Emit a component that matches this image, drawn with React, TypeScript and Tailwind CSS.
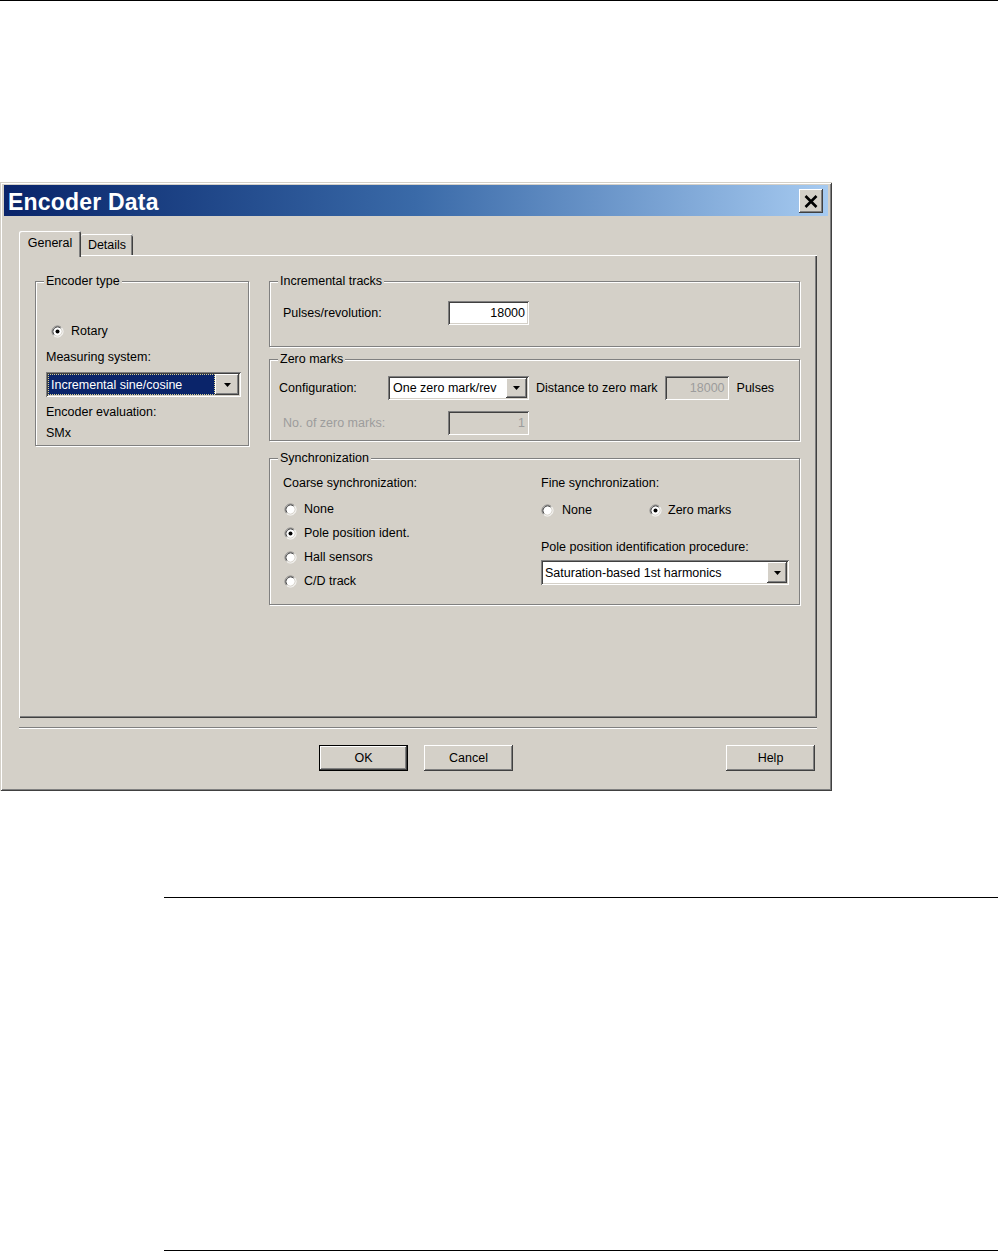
import React from "react";

const sunken =
  "shadow-[inset_1px_1px_0_#808080,inset_-1px_-1px_0_#ffffff,inset_2px_2px_0_#404040,inset_-2px_-2px_0_#d4d0c8]";
const raised =
  "shadow-[inset_-1px_-1px_0_#404040,inset_1px_1px_0_#ffffff,inset_-2px_-2px_0_#808080,inset_2px_2px_0_#d4d0c8]";
const etched = "border border-[#808080] shadow-[inset_1px_1px_0_#ffffff,1px_1px_0_#ffffff]";

function Radio({ checked }: { checked?: boolean }) {
  return (
    <svg width="13" height="13" viewBox="-0.5 -0.5 13 13" className="shrink-0">
      <circle cx="6" cy="6" r="5" fill="#ffffff" />
      <path d="M2.11 9.89A5.5 5.5 0 0 1 9.89 2.11" stroke="#808080" fill="none" />
      <path d="M9.89 2.11A5.5 5.5 0 0 1 2.11 9.89" stroke="#ffffff" fill="none" />
      <path d="M2.82 9.18A4.5 4.5 0 0 1 9.18 2.82" stroke="#404040" fill="none" />
      <path d="M9.18 2.82A4.5 4.5 0 0 1 2.82 9.18" stroke="#d4d0c8" fill="none" />
      {checked && <circle cx="6" cy="6" r="2" fill="#000000" />}
    </svg>
  );
}

function Arrow() {
  return (
    <svg width="7" height="4" viewBox="0 0 7 4">
      <path d="M0 0H7L3.5 4Z" fill="#000000" />
    </svg>
  );
}

function Legend({ children }: { children: React.ReactNode }) {
  return (
    <span className="absolute left-[8px] -top-[9px] px-[2px] bg-[#d4d0c8] leading-[16px] whitespace-nowrap">
      {children}
    </span>
  );
}

function Combo({
  outer,
  btn,
  children,
}: {
  outer: string;
  btn: string;
  children: React.ReactNode;
}) {
  return (
    <div className={`${outer} ${sunken} bg-white p-[2px] flex shrink-0`}>
      <div className="flex-1 flex items-center min-w-0 overflow-hidden whitespace-nowrap">{children}</div>
      <div className={`${btn} ${raised} bg-[#d4d0c8] flex items-center justify-center shrink-0`}>
        <Arrow />
      </div>
    </div>
  );
}

function Dialog() {
  return (
    <div className="mt-[181px] w-[832px] h-[609px] shrink-0 bg-[#d4d0c8] pt-[3px] px-[4px] pb-[4px] flex flex-col shadow-[inset_1px_1px_0_#d4d0c8,inset_-1px_-1px_0_#404040,inset_2px_2px_0_#ffffff,inset_-2px_-2px_0_#808080]">
      {/* Title bar */}
      <div className="h-[31px] shrink-0 bg-linear-to-r from-[#0a246a] via-[#3a6aa8] to-[#a6caf0] flex items-center justify-between pl-[4px] pr-[5px]">
        <span className="text-white font-bold text-[23px] leading-none pt-[4px] tracking-[0.2px]">Encoder Data</span>
        <div className={`w-[24px] h-[24px] ${raised} bg-[#d4d0c8] flex items-center justify-center mt-[1px]`}>
          <svg width="14" height="13" viewBox="0 0 14 13">
            <path d="M1.5 1L12.5 12M12.5 1L1.5 12" stroke="#000000" strokeWidth="2.6" />
          </svg>
        </div>
      </div>

      {/* Body */}
      <div className="flex-1 flex flex-col pl-[15px] pr-[11px]">
        {/* Tabs */}
        <div className="mt-[15px] h-[24px] flex items-end shrink-0">
          <div className="relative z-10 w-[62px] h-[26px] -mb-[2px] pb-[2px] bg-[#d4d0c8] rounded-t-[2px] flex items-center justify-center shadow-[inset_1px_1px_0_#ffffff,inset_-1px_0_0_#404040,inset_-2px_0_0_#808080]">
            General
          </div>
          <div className="w-[52px] h-[21px] bg-[#d4d0c8] rounded-t-[2px] flex items-center justify-center shadow-[inset_0_1px_0_#ffffff,inset_-1px_0_0_#404040,inset_-2px_0_0_#808080]">
            Details
          </div>
        </div>

        {/* Tab panel */}
        <div className="h-[463px] shrink-0 flex pt-[26px] pl-[16px] shadow-[inset_1px_1px_0_#ffffff,inset_-1px_-1px_0_#404040,inset_-2px_-2px_0_#808080]">
          {/* Encoder type */}
          <div className={`relative w-[214px] h-[165px] ${etched} pl-[10px] pt-[41px] flex flex-col shrink-0`}>
            <Legend>Encoder type</Legend>
            <div className="h-[16px] flex items-center pl-[5px] gap-[7px]">
              <Radio checked />
              <span>Rotary</span>
            </div>
            <div className="mt-[10px] h-[16px]">Measuring system:</div>
            <Combo outer="mt-[7px] w-[195px] h-[25px]" btn="w-[24px] h-full">
              <div className="h-full w-full bg-[#0a246a] text-white flex items-center pl-[2px] border border-dotted border-[#d8d090]">
                Incremental sine/cosine
              </div>
            </Combo>
            <div className="mt-[7px] h-[16px]">Encoder evaluation:</div>
            <div className="mt-[5px] h-[16px]">SMx</div>
          </div>

          {/* Right column */}
          <div className="ml-[20px] w-[531px] flex flex-col shrink-0">
            {/* Incremental tracks */}
            <div className={`relative h-[66px] ${etched} pt-[19px] pl-[13px]`}>
              <Legend>Incremental tracks</Legend>
              <div className="flex items-center h-[24px]">
                <span className="w-[165px] shrink-0">Pulses/revolution:</span>
                <div className={`w-[81px] h-[24px] ${sunken} bg-white flex items-center justify-end pr-[4px]`}>18000</div>
              </div>
            </div>

            {/* Zero marks */}
            <div className={`relative mt-[12px] h-[82px] ${etched} pt-[16px] pl-[9px] flex flex-col`}>
              <Legend>Zero marks</Legend>
              <div className="flex items-center h-[24px]">
                <span className="w-[109px] shrink-0">Configuration:</span>
                <Combo outer="w-[141px] h-[24px]" btn="w-[21px] h-full">
                  <span className="pl-[3px]">One zero mark/rev</span>
                </Combo>
                <span className="ml-[7px] whitespace-nowrap">Distance to zero mark</span>
                <div className={`ml-[7px] w-[64px] h-[24px] ${sunken} bg-[#d4d0c8] text-[#9c9c9c] flex items-center justify-end pr-[4px] shrink-0`}>
                  18000
                </div>
                <span className="ml-[8px]">Pulses</span>
              </div>
              <div className="mt-[11px] pl-[4px] flex items-center h-[24px]">
                <span className="w-[165px] shrink-0 text-[#9c9c9c]">No. of zero marks:</span>
                <div className={`w-[81px] h-[24px] ${sunken} bg-[#d4d0c8] text-[#9c9c9c] flex items-center justify-end pr-[4px]`}>1</div>
              </div>
            </div>

            {/* Synchronization */}
            <div className={`relative mt-[17px] h-[147px] ${etched} pt-[16px] pl-[13px] flex`}>
              <Legend>Synchronization</Legend>
              <div className="w-[258px] flex flex-col shrink-0">
                <div className="h-[16px]">Coarse synchronization:</div>
                <div className="mt-[10px] flex flex-col gap-[8px]">
                  {[
                    ["None", false],
                    ["Pole position ident.", true],
                    ["Hall sensors", false],
                    ["C/D track", false],
                  ].map(([t, c]) => (
                    <div key={t as string} className="h-[16px] flex items-center pl-[1px] gap-[7px]">
                      <Radio checked={c as boolean} />
                      <span>{t as string}</span>
                    </div>
                  ))}
                </div>
              </div>
              <div className="flex flex-col">
                <div className="h-[16px]">Fine synchronization:</div>
                <div className="mt-[11px] h-[16px] flex items-center">
                  <div className="w-[108px] flex items-center gap-[8px]">
                    <Radio />
                    <span>None</span>
                  </div>
                  <div className="flex items-center gap-[6px]">
                    <Radio checked />
                    <span>Zero marks</span>
                  </div>
                </div>
                <div className="mt-[21px] h-[16px] whitespace-nowrap">Pole position identification procedure:</div>
                <Combo outer="mt-[5px] w-[248px] h-[25px]" btn="w-[20px] h-full">
                  <span className="pl-[2px]">Saturation-based 1st harmonics</span>
                </Combo>
              </div>
            </div>
          </div>
        </div>

        {/* Separator */}
        <div className="mt-[9px] h-[2px] border-t border-[#808080] border-b border-b-white shrink-0" />

        {/* Buttons */}
        <div className="mt-[16px] h-[26px] flex shrink-0">
          <div className={`ml-[300px] w-[89px] h-[26px] border border-black bg-[#d4d0c8] ${raised} flex items-center justify-center`}>
            OK
          </div>
          <div className={`ml-[16px] w-[89px] h-[26px] bg-[#d4d0c8] ${raised} flex items-center justify-center`}>
            Cancel
          </div>
          <div className={`ml-auto mr-[2px] w-[89px] h-[26px] bg-[#d4d0c8] ${raised} flex items-center justify-center`}>
            Help
          </div>
        </div>
      </div>
    </div>
  );
}

export default function App() {
  return (
    <div className="w-[998px] h-[1251px] bg-white flex flex-col overflow-hidden font-['Liberation_Sans',Arial,sans-serif] text-[12.5px] leading-[16px] text-black">
      <div className="h-px w-full bg-black shrink-0" />
      <Dialog />
      <div className="mt-[106px] ml-[164px] h-px bg-black shrink-0" />
      <div className="mt-[352px] ml-[164px] h-px bg-black shrink-0" />
    </div>
  );
}
